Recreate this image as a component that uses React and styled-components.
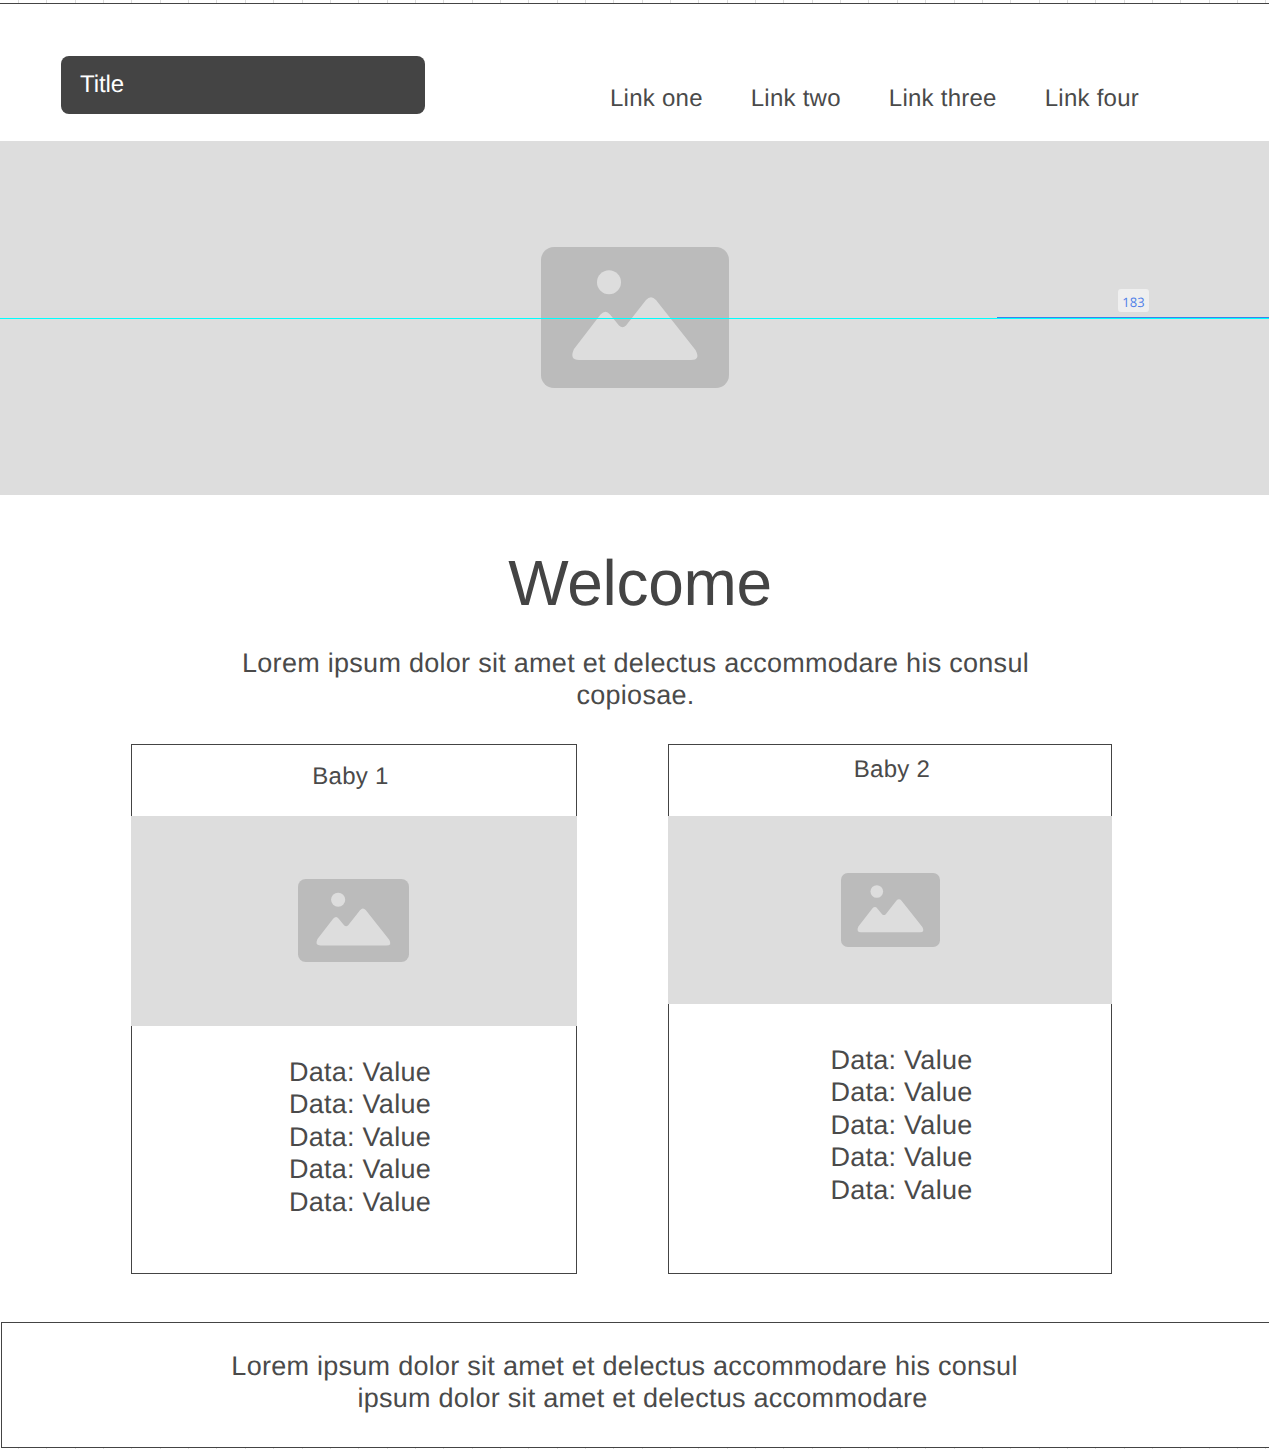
import React from 'react';
import styled, { createGlobalStyle } from 'styled-components';

const Global = createGlobalStyle`
  html, body {
    margin: 0;
    padding: 0;
    background: #fff;
    overflow: hidden;
  }
  body {
    font-family: "Liberation Sans", Arial, sans-serif;
    color: #4a4a4a;
    text-rendering: geometricPrecision;
  }
`;

const Page = styled.div`
  position: relative;
  width: 1269px;
  height: 1449px;
  overflow: hidden;
`;

const Ruler = styled.div`
  height: 3px;
  border-bottom: 1px solid #444;
  background: repeating-linear-gradient(90deg, transparent 0, transparent 18px, #ddd 18px, #ddd 19px, transparent 19px, transparent 28.35px);
`;

const Header = styled.header`
  height: 137px;
  display: flex;
  align-items: flex-start;
`;

const TitleBar = styled.div`
  margin: 52px 0 0 61px;
  width: 345px;
  height: 58px;
  padding-left: 19px;
  background: #444;
  border-radius: 8px;
  color: #fff;
  font-size: 24px;
  letter-spacing: -0.1px;
  line-height: 58px;
`;

const Nav = styled.nav`
  display: flex;
  gap: 48px;
  margin: 78px 0 0 185px;
`;

const NavLink = styled.a`
  font-size: 24px;
  line-height: 34px;
  letter-spacing: 0.25px;
  color: #4a4a4a;
  white-space: nowrap;
`;

const Hero = styled.div`
  height: 354px;
  background: #ddd;
  display: flex;
  justify-content: center;
  padding-top: 106px;
  box-sizing: border-box;
`;

const GuideLine = styled.div`
  position: absolute;
  left: 0;
  right: 0;
  top: 318px;
  height: 1px;
  background: #0ff;
`;

const MeasureLine = styled.div`
  position: absolute;
  left: 997px;
  right: 0;
  top: 317px;
  height: 1px;
  background: #3f7fe8;
`;

const MeasureBadge = styled.div`
  position: absolute;
  left: 1118px;
  top: 289px;
  width: 31px;
  height: 23px;
  border-radius: 3px;
  background: #efefef;
  color: #4f7fe8;
  font-family: "Open Sans", sans-serif;
  font-size: 13px;
  line-height: 26px;
  text-align: center;
`;

const Intro = styled.section`
  text-align: center;
`;

const Heading = styled.h1`
  margin: 0;
  padding: 50px 0 0 11px;
  font-size: 64px;
  font-weight: 400;
  line-height: 76px;
  letter-spacing: -0.3px;
  color: #444;
`;

const Lead = styled.p`
  margin: 0;
  padding: 26px 0 0 2px;
  font-size: 27px;
  line-height: 32.4px;
  letter-spacing: 0.28px;
`;

const Cards = styled.div`
  display: flex;
  gap: 91px;
  padding: 32px 0 0 131px;
`;

const Card = styled.article`
  box-sizing: border-box;
  width: ${p => p.$width}px;
  height: 530px;
  border: 1px solid #444;
  display: flex;
  flex-direction: column;
`;

const CardTitle = styled.div`
  height: 71px;
  flex: none;
  box-sizing: border-box;
  padding: ${p => p.$top}px ${p => p.$right}px 0 ${p => p.$left}px;
  text-align: center;
  font-size: 24px;
  line-height: 32px;
  letter-spacing: 0.3px;
`;

const CardImage = styled.div`
  height: ${p => p.$height}px;
  margin: 0 -1px;
  flex: none;
  background: #ddd;
  box-sizing: border-box;
  padding: ${p => p.$top}px ${p => p.$right}px 0 0;
  display: flex;
  justify-content: center;
`;

const DataList = styled.div`
  padding: ${p => p.$top}px 0 0 ${p => p.$left}px;
  text-align: center;
  font-size: 27px;
  line-height: 32.45px;
  letter-spacing: 0.25px;
`;

const Footer = styled.footer`
  box-sizing: border-box;
  width: 1300px;
  height: 126px;
  margin: 48px 0 0 1px;
  border: 1px solid #444;
  padding-top: 27px;
  font-size: 27px;
  line-height: 32.4px;
  letter-spacing: 0.27px;
  text-align: center;
`;

const FooterLine = styled.div`
  width: 1269px;
  padding: 0 ${p => p.$right}px 0 ${p => p.$left}px;
  box-sizing: border-box;
`;

const BottomTicks = styled.div`
  position: absolute;
  left: 0;
  right: 0;
  bottom: 0;
  height: 1px;
  background: repeating-linear-gradient(90deg, transparent 0, transparent 18px, #ddd 18px, #ddd 19px, transparent 19px, transparent 28.35px);
`;

const PlaceholderIcon = ({ width, height }) => (
  <svg width={width} height={height} viewBox="0 0 188 141" preserveAspectRatio="none">
    <rect width="188" height="141" rx="13" fill="#bbb" />
    <circle cx="68" cy="35.3" r="12" fill="#ddd" />
    <path
      d="M59.5 67.5Q64.7 62 69 67.5L78 78.5Q81.5 82 85 78.5L105 53Q110 47.5 115 53L154.5 103Q160 113 150 113L38 113Q28 113 33 102Z"
      fill="#ddd"
    />
  </svg>
);

const lines = [1, 2, 3, 4, 5];

const App = () => (
  <Page>
    <Global />
    <Ruler />
    <Header>
      <TitleBar>Title</TitleBar>
      <Nav>
        <NavLink>Link one</NavLink>
        <NavLink>Link two</NavLink>
        <NavLink>Link three</NavLink>
        <NavLink>Link four</NavLink>
      </Nav>
    </Header>
    <Hero>
      <PlaceholderIcon width={188} height={141} />
    </Hero>
    <Intro>
      <Heading>Welcome</Heading>
      <Lead>
        Lorem ipsum dolor sit amet et delectus accommodare his consul
        <br />
        copiosae.
      </Lead>
    </Intro>
    <Cards>
      <Card $width={446}>
        <CardTitle $top={16} $right={7} $left={0}>Baby 1</CardTitle>
        <CardImage $height={210} $top={63} $right={2}>
          <PlaceholderIcon width={111} height={83} />
        </CardImage>
        <DataList $top={30} $left={12}>
          {lines.map(n => <div key={n}>Data: Value</div>)}
        </DataList>
      </Card>
      <Card $width={444}>
        <CardTitle $top={9} $right={0} $left={4}>Baby 2</CardTitle>
        <CardImage $height={188} $top={57} $right={0}>
          <PlaceholderIcon width={99} height={74} />
        </CardImage>
        <DataList $top={40} $left={23}>
          {lines.map(n => <div key={n}>Data: Value</div>)}
        </DataList>
      </Card>
    </Cards>
    <Footer>
      <FooterLine $left={0} $right={24}>Lorem ipsum dolor sit amet et delectus accommodare his consul</FooterLine>
      <FooterLine $left={12} $right={0}>ipsum dolor sit amet et delectus accommodare</FooterLine>
    </Footer>
    <GuideLine />
    <MeasureLine />
    <MeasureBadge>183</MeasureBadge>
    <BottomTicks />
  </Page>
);

export default App;
